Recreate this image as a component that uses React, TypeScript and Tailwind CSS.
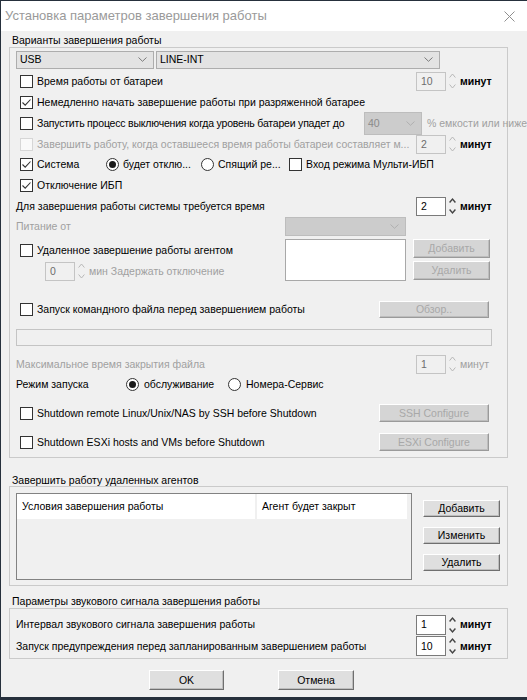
import React from "react";

function Check({ checked = false, disabled = false }: { checked?: boolean; disabled?: boolean }) {
  return (
    <span
      className={
        disabled
          ? "w-[13px] h-[13px] shrink-0 border border-[#d6d6d6] bg-[#f9f9f9] flex items-center justify-center"
          : "w-[13px] h-[13px] shrink-0 border border-[#333333] bg-white flex items-center justify-center"
      }
    >
      {checked && (
        <svg width="11" height="11" viewBox="0 0 11 11">
          <path d="M1.5 5.5 L4.2 8.2 L9.5 2.5" fill="none" stroke="#333333" strokeWidth="1.1" />
        </svg>
      )}
    </span>
  );
}

function Radio({ on = false }: { on?: boolean }) {
  return (
    <span className="w-[13px] h-[13px] shrink-0 rounded-full border border-[#333333] bg-white flex items-center justify-center">
      {on && <span className="w-[7px] h-[7px] rounded-full bg-[#1a1a1a]" />}
    </span>
  );
}

function Arrows({ disabled = false }: { disabled?: boolean }) {
  const c = disabled ? "#b8b8b8" : "#444444";
  const w = disabled ? 1 : 1.4;
  return (
    <svg className="ml-[3px] shrink-0" width="7" height="18" viewBox="0 0 7 18">
      <path d="M0.6 5.5 L3.5 2 L6.4 5.5" fill="none" stroke={c} strokeWidth={w} />
      <path d="M0.6 12.5 L3.5 16 L6.4 12.5" fill="none" stroke={c} strokeWidth={w} />
    </svg>
  );
}

function Spin({
  value,
  disabled = false,
  tall = false,
  unit = true,
  unitGray = false,
}: {
  value: string;
  disabled?: boolean;
  tall?: boolean;
  unit?: boolean;
  unitGray?: boolean;
}) {
  return (
    <div className="flex items-center shrink-0">
      <div
        className={
          (tall ? "h-[20px] " : "h-[19px] ") +
          (disabled
            ? "w-[30px] border border-[#c4c4c4] bg-[#f0f0f0] text-[#6d6d6d] pl-[4px] flex items-center"
            : "w-[30px] border border-[#7a7a7a] bg-white text-black pl-[4px] flex items-center")
        }
      >
        {value}
      </div>
      <Arrows disabled={disabled} />
      {unit && (
        <span className={unitGray ? "ml-[4px] text-[#a0a0a0]" : "ml-[4px] font-bold text-black"}>минут</span>
      )}
    </div>
  );
}

function Btn({
  children,
  disabled = false,
  className = "",
}: {
  children: React.ReactNode;
  disabled?: boolean;
  className?: string;
}) {
  return (
    <div
      className={
        (disabled
          ? "bg-[#d5d5d5] text-[#a8a8a8] border-t-white border-l-white border-r-[#9a9a9a] border-b-[#9a9a9a] "
          : "bg-[#dfdfdf] text-black border-t-white border-l-white border-r-[#6f6f6f] border-b-[#6f6f6f] ") +
        "border flex items-center justify-center shrink-0 shadow-[inset_-1px_-1px_0_#bdbdbd] " +
        className
      }
    >
      {children}
    </div>
  );
}

function Select({
  text,
  disabled = false,
  className = "",
}: {
  text?: string;
  disabled?: boolean;
  className?: string;
}) {
  return (
    <div
      className={
        (disabled
          ? "bg-[#cccccc] border-[#bdbdbd] text-[#8a8a8a] "
          : "bg-[#e3e3e3] border-[#adadad] text-black ") +
        "border flex items-center justify-between pl-[3px] pr-[6px] shrink-0 " +
        className
      }
    >
      <span>{text}</span>
      <svg width="9" height="5" viewBox="0 0 9 5">
        <path d="M0.5 0.5 L4.5 4.3 L8.5 0.5" fill="none" stroke={disabled ? "#b0b0b0" : "#7a7a7a"} strokeWidth="1" />
      </svg>
    </div>
  );
}

export default function App() {
  return (
    <div className="w-[527px] h-[700px] bg-[#26303c] pt-[1px] pl-[1px] overflow-hidden font-['Liberation_Sans',Arial,sans-serif] text-[10.5px] leading-[13px] text-black">
      <div className="w-[526px] h-[696px] bg-[#f0f0f0] flex flex-col">
        {/* Title bar */}
        <div className="h-[30px] bg-white flex items-center justify-between pl-[4px] pr-[12px] shrink-0">
          <span className="text-[13px] text-[#9a9a9a] leading-[16px]">Установка параметров завершения работы</span>
          <svg width="11" height="11" viewBox="0 0 11 11">
            <path d="M0.5 0.5 L10.5 10.5 M10.5 0.5 L0.5 10.5" stroke="#8f8f8f" strokeWidth="1" />
          </svg>
        </div>

        {/* Group 1 */}
        <div className="h-[16px] pt-[3px] pl-[11px]">Варианты завершения работы</div>
        <div className="ml-[8px] w-[499px] border border-[#cacaca] pb-[5px]">
          {/* R1 */}
          <div className="h-[23px] flex items-center pl-[6px]">
            <Select text="USB" className="w-[138px] h-[18px]" />
            <Select text="LINE-INT" className="ml-[2px] w-[284px] h-[18px]" />
          </div>
          {/* R2 */}
          <div className="h-[20px] flex items-center">
            <div className="w-[406px] shrink-0 flex items-center pl-[10px] gap-[4px]">
              <Check />
              <span>Время работы от батареи</span>
            </div>
            <Spin value="10" disabled />
          </div>
          {/* R3 */}
          <div className="h-[22px] flex items-center pl-[10px] gap-[4px]">
            <Check checked />
            <span>Немедленно начать завершение работы при разряженной батарее</span>
          </div>
          {/* R4 */}
          <div className="h-[20px] flex items-center">
            <div className="w-[354px] shrink-0 flex items-center pl-[10px] gap-[4px] whitespace-nowrap">
              <Check />
              <span className="tracking-[-0.2px]">Запустить процесс выключения когда уровень батареи упадет до</span>
            </div>
            <Select text="40" disabled className="w-[58px] h-[23px]" />
            <span className="ml-[5px] shrink-0 whitespace-nowrap text-[#a0a0a0]">% емкости или ниже</span>
          </div>
          {/* R5 */}
          <div className="h-[22px] flex items-center">
            <div className="w-[406px] shrink-0 flex items-center pl-[10px] gap-[4px] whitespace-nowrap">
              <Check disabled />
              <span className="text-[#a0a0a0]">Завершить работу, когда оставшееся время работы батареи составляет м...</span>
            </div>
            <Spin value="2" disabled />
          </div>
          {/* R6 */}
          <div className="h-[19px] flex items-center pl-[10px] whitespace-nowrap">
            <div className="w-[86px] shrink-0 flex items-center gap-[4px]">
              <Check checked />
              <span>Система</span>
            </div>
            <div className="w-[95px] shrink-0 flex items-center gap-[4px]">
              <Radio on />
              <span>будет отклю...</span>
            </div>
            <div className="w-[88px] shrink-0 flex items-center gap-[4px]">
              <Radio />
              <span>Спящий ре...</span>
            </div>
            <div className="flex items-center gap-[4px]">
              <Check />
              <span>Вход режима Мульти-ИБП</span>
            </div>
          </div>
          {/* R7 */}
          <div className="h-[22px] flex items-center pl-[10px] gap-[4px]">
            <Check checked />
            <span>Отключение ИБП</span>
          </div>
          {/* R8 */}
          <div className="h-[20px] flex items-center">
            <div className="w-[406px] shrink-0 pl-[6px]">Для завершения работы системы требуется время</div>
            <Spin value="2" />
          </div>
          {/* R9 */}
          <div className="h-[21px] flex items-center">
            <div className="w-[275px] shrink-0 pl-[6px] text-[#a0a0a0]">Питание от</div>
            <Select disabled className="w-[121px] h-[19px]" />
          </div>
          {/* R10 */}
          <div className="h-[46px] flex items-start">
            <div className="w-[275px] shrink-0 pt-[2px]">
              <div className="h-[22px] flex items-center pl-[10px] gap-[4px]">
                <Check />
                <span>Удаленное завершение работы агентом</span>
              </div>
              <div className="h-[20px] flex items-center pl-[35px]">
                <Spin value="0" disabled unit={false} />
                <span className="ml-[4px] text-[#a0a0a0]">мин Задержать отключение</span>
              </div>
            </div>
            <div className="mt-[2px] w-[121px] h-[42px] shrink-0 bg-white border border-[#a8a8a8]" />
            <div className="ml-[7px] mt-[2px] flex flex-col gap-[3px]">
              <Btn disabled className="w-[77px] h-[19px]">Добавить</Btn>
              <Btn disabled className="w-[77px] h-[19px]">Удалить</Btn>
            </div>
          </div>
          {/* R11 */}
          <div className="mt-[16px] h-[20px] flex items-center">
            <div className="w-[369px] shrink-0 flex items-center pl-[10px] gap-[4px]">
              <Check />
              <span>Запуск командного файла перед завершением работы</span>
            </div>
            <Btn disabled className="w-[110px] h-[17px]">Обзор..</Btn>
          </div>
          {/* Textbox */}
          <div className="mt-[10px] ml-[6px] w-[476px] h-[17px] border border-[#c4c4c4] bg-[#f0f0f0]" />
          {/* R12 */}
          <div className="mt-[8px] h-[20px] flex items-center">
            <div className="w-[406px] shrink-0 pl-[6px] text-[#a0a0a0]">Максимальное время закрытия файла</div>
            <Spin value="1" disabled unitGray />
          </div>
          {/* R13 */}
          <div className="h-[20px] flex items-center whitespace-nowrap">
            <div className="w-[116px] shrink-0 pl-[6px]">Режим запуска</div>
            <div className="w-[102px] shrink-0 flex items-center gap-[5px]">
              <Radio on />
              <span>обслуживание</span>
            </div>
            <div className="flex items-center gap-[5px]">
              <Radio />
              <span>Номера-Сервис</span>
            </div>
          </div>
          {/* R14 */}
          <div className="mt-[9px] h-[20px] flex items-center">
            <div className="w-[369px] shrink-0 flex items-center pl-[10px] gap-[4px]">
              <Check />
              <span>Shutdown remote Linux/Unix/NAS by SSH before Shutdown</span>
            </div>
            <Btn disabled className="w-[110px] h-[18px]">SSH Configure</Btn>
          </div>
          {/* R15 */}
          <div className="mt-[9px] h-[20px] flex items-center">
            <div className="w-[369px] shrink-0 flex items-center pl-[10px] gap-[4px]">
              <Check />
              <span>Shutdown ESXi hosts and VMs before Shutdown</span>
            </div>
            <Btn disabled className="w-[110px] h-[18px]">ESXi Configure</Btn>
          </div>
        </div>

        {/* Group 2 */}
        <div className="h-[28px] pt-[16px] pl-[11px]">Завершить работу удаленных агентов</div>
        <div className="ml-[8px] w-[499px] h-[100px] border border-[#cacaca] flex items-start">
          <div className="ml-[6px] mt-[6px] w-[396px] h-[87px] shrink-0 border border-[#828282] bg-[#f0f0f0]">
            <div className="w-[390px] h-[25px] bg-white flex">
              <div className="w-[240px] h-full flex items-center pl-[5px] border-r-2 border-[#f0f0f0]">
                Условия завершения работы
              </div>
              <div className="flex-1 h-full flex items-center pl-[5px]">Агент будет закрыт</div>
            </div>
          </div>
          <div className="ml-[11px] pt-[13px] flex flex-col gap-[10px]">
            <Btn className="w-[77px] h-[17px]">Добавить</Btn>
            <Btn className="w-[77px] h-[17px]">Изменить</Btn>
            <Btn className="w-[77px] h-[17px]">Удалить</Btn>
          </div>
        </div>

        {/* Group 3 */}
        <div className="h-[22px] pt-[9px] pl-[11px]">Параметры звукового сигнала завершения работы</div>
        <div className="ml-[8px] w-[499px] border border-[#cacaca] pb-[2px]">
          <div className="mt-[5px] h-[21px] flex items-center">
            <div className="w-[406px] shrink-0 pl-[6px]">Интервал звукового сигнала завершения работы</div>
            <Spin value="1" tall />
          </div>
          <div className="mt-[1px] h-[20px] flex items-center">
            <div className="w-[406px] shrink-0 pl-[6px]">Запуск предупреждения перед запланированным завершением работы</div>
            <Spin value="10" tall />
          </div>
        </div>

        {/* Bottom buttons */}
        <div className="mt-[11px] flex pl-[148px] gap-[54px]">
          <Btn className="w-[75px] h-[20px]">OK</Btn>
          <Btn className="w-[76px] h-[20px]">Отмена</Btn>
        </div>
      </div>
    </div>
  );
}
